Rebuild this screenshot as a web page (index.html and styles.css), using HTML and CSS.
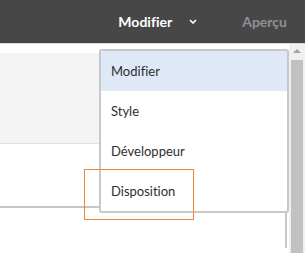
FILE: index.html
```html
<!DOCTYPE html>
<html>
<head>
    <meta charset="UTF-8" />
    <title>Modifier</title>
    <link rel="stylesheet" href="styles.css">
</head>
<body>

    <div class="topbar">
        <span class="mode">Modifier</span>
        <svg class="chevron" width="8" height="5" viewBox="0 0 8 5">
            <path d="M1 1 L4 4 L7 1" fill="none" stroke="#ffffff" stroke-width="1.6"/>
        </svg>
        <span class="preview">Aperçu</span>
    </div>

    <div class="main">
        <div class="content">
            <div class="panel"></div>
            <div class="box"></div>
        </div>
        <div class="scrollbar">
            <div class="arrow"></div>
            <div class="thumb"></div>
        </div>
    </div>

    <div class="menu">
        <div class="item active">Modifier</div>
        <div class="item">Style</div>
        <div class="item">Développeur</div>
        <div class="item">Disposition</div>
    </div>

    <div class="focus"></div>

</body>
</html>
```

FILE: styles.css
```css
body {
    margin: 0;
    width: 305px;
    height: 253px;
    overflow: hidden;
    position: relative;
    background-color: #ffffff;
    font-family: Lato, "Open Sans", sans-serif;
    font-variant-ligatures: none;
}

.topbar {
    display: flex;
    align-items: center;
    justify-content: flex-end;
    height: 43px;
    padding-right: 18px;
    background-color: #474747;
    border-bottom: 1px solid #d6d6d6;
}

.mode {
    color: #ffffff;
    font-size: 14px;
    font-weight: bold;
}

.chevron {
    margin-left: 17px;
    margin-right: 45px;
}

.preview {
    color: #8c9197;
    font-size: 14px;
    font-weight: bold;
}

.main {
    display: flex;
    height: 209px;
}

.content {
    flex: 1;
    padding-top: 9px;
}

.panel {
    height: 90px;
    background-color: #f4f4f4;
    border-bottom: 1px solid #e2e2e2;
}

.box {
    margin-top: 62px;
    margin-right: 2px;
    height: 40px;
    border-top: 2px solid #c6c6c6;
    border-right: 2px solid #c6c6c6;
}

.scrollbar {
    width: 16px;
    background-color: #f0f0f0;
    display: flex;
    flex-direction: column;
    align-items: center;
}

.arrow {
    margin-top: 5px;
    width: 0;
    height: 0;
    border-left: 4px solid transparent;
    border-right: 4px solid transparent;
    border-bottom: 4px solid #a3a3a3;
}

.thumb {
    margin-top: 7px;
    width: 12px;
    flex: 1;
    background-color: #c1c1c1;
}

.menu {
    position: absolute;
    left: 99px;
    top: 49px;
    width: 186px;
    background-color: #ffffff;
    border: 2px solid #c8c8c8;
    border-radius: 3px;
}

.item {
    height: 40px;
    line-height: 40px;
    padding-left: 10px;
    font-size: 13px;
    color: #2e2e2e;
}

.item.active {
    background-color: #dfe8f6;
}

.focus {
    position: absolute;
    left: 84px;
    top: 169px;
    width: 108px;
    height: 49px;
    border: 1px solid #f08437;
}
```
